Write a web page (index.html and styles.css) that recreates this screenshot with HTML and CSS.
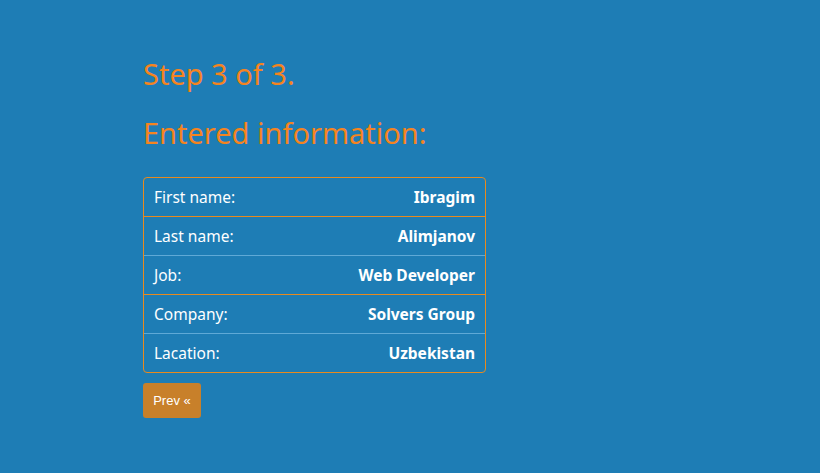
FILE: index.html
```html
<!DOCTYPE html>
<html>
<head>
<meta charset="utf-8">
<link rel="stylesheet" href="styles.css">
</head>
<body>
<div class="wrap">
  <h2 class="step">Step 3 of 3.</h2>
  <h2 class="title">Entered information:</h2>
  <ul class="info">
    <li class="row"><span class="label">First name:</span><span class="value">Ibragim</span></li>
    <li class="row alt"><span class="label">Last name:</span><span class="value">Alimjanov</span></li>
    <li class="row"><span class="label">Job:</span><span class="value">Web Developer</span></li>
    <li class="row alt"><span class="label">Company:</span><span class="value">Solvers Group</span></li>
    <li class="row"><span class="label">Lacation:</span><span class="value">Uzbekistan</span></li>
  </ul>
  <button class="btn">Prev «</button>
</div>
</body>
</html>
```

FILE: styles.css
```css
html, body {
  margin: 0;
  padding: 0;
  background: #1e7db5;
  height: 100%;
}
body {
  font-family: "Noto Sans", "DejaVu Sans", sans-serif;
}
.wrap {
  padding: 56px 0 0 143px;
  width: 343px;
}
.step, .title {
  margin: 0;
  color: #f5841f;
  font-weight: 400;
  font-size: 29px;
  line-height: 36px;
}
.title {
  margin-top: 23px;
}
.info {
  list-style: none;
  margin: 26px 0 0 0;
  padding: 0;
  border: 1px solid #e88a1e;
  border-radius: 4px;
}
.row {
  display: flex;
  justify-content: space-between;
  align-items: center;
  height: 38px;
  padding: 0 10px;
  color: #ffffff;
  font-size: 15.5px;
  border-top: 1px solid #e88a1e;
}
.row:first-child {
  border-top: none;
}
.row.alt + .row {
  border-top-color: #5fa9d6;
}
.label {
  font-weight: 400;
}
.value {
  font-weight: 700;
}
.btn {
  margin-top: 10px;
  background: #c8802a;
  border: none;
  border-radius: 3px;
  color: #ffffff;
  font-family: "Liberation Sans", Arial, sans-serif;
  font-size: 13px;
  width: 58px;
  height: 35px;
  padding: 0;
}
```
